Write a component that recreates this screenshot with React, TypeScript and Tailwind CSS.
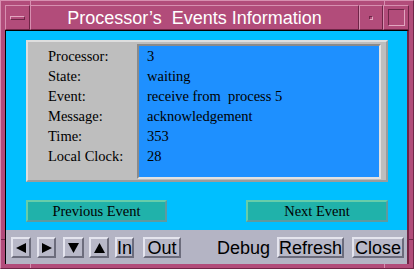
import React from "react";

const serif = { fontFamily: '"Liberation Serif", "Times New Roman", serif' };
const sans = { fontFamily: '"Liberation Sans", Arial, Helvetica, sans-serif' };

function ToolBtn({ children, w }: { children: React.ReactNode; w: string }) {
  return (
    <div
      className={`${w} h-[21px] box-border flex items-center justify-center bg-[#b8b8c8] border-2 border-t-[#e4e4ee] border-l-[#e4e4ee] border-b-[#6c6c7c] border-r-[#6c6c7c] text-black text-[18px] leading-none`}
    >
      {children}
    </div>
  );
}

function Tri({ dir }: { dir: "l" | "r" | "d" | "u" }) {
  const pts =
    dir === "l"
      ? "10,0 10,10 0,5"
      : dir === "r"
      ? "0,0 0,10 10,5"
      : dir === "d"
      ? "0,0 11,0 5.5,10"
      : "5.5,0 11,10 0,10";
  return (
    <svg width={dir === "l" || dir === "r" ? 10 : 11} height={10} viewBox={dir === "l" || dir === "r" ? "0 0 10 10" : "0 0 11 10"}>
      <polygon points={pts} fill="#000" />
    </svg>
  );
}

export default function App() {
  const labels = ["Processor:", "State:", "Event:", "Message:", "Time:", "Local Clock:"];
  const values = ["3", "waiting", "receive from  process 5", "acknowledgement", "353", "28"];
  return (
    <div className="relative w-[414px] h-[269px] box-border bg-[#b24c7a] border border-t-[#d78fb0] border-l-[#d78fb0] border-b-[#6f2547] border-r-[#6f2547] p-[4px] flex flex-col overflow-hidden">
      {/* corner markers */}
      <div className="absolute left-[29px] top-0 w-[1px] h-[4px] bg-[#d78fb0]" />
      <div className="absolute left-[383px] top-0 w-[1px] h-[4px] bg-[#d78fb0]" />
      <div className="absolute left-[29px] bottom-0 w-[1px] h-[4px] bg-[#d78fb0]" />
      <div className="absolute left-[383px] bottom-0 w-[1px] h-[4px] bg-[#d78fb0]" />
      <div className="absolute left-0 top-[238px] w-[4px] h-[1px] bg-[#6f2547]" />
      <div className="absolute right-0 top-[238px] w-[4px] h-[1px] bg-[#6f2547]" />

      {/* title bar */}
      <div className="h-[25px] flex shrink-0">
        <div className="w-[25px] box-border border border-t-[#d78fb0] border-l-[#d78fb0] border-b-[#6f2547] border-r-[#6f2547] flex items-center justify-center">
          <div className="w-[15px] h-[4px] box-border border border-t-[#e2a6c0] border-l-[#e2a6c0] border-b-[#6f2547] border-r-[#6f2547] bg-[#b24c7a]" />
        </div>
        <div
          className="flex-1 box-border border border-t-[#d78fb0] border-l-[#d78fb0] border-b-[#6f2547] border-r-[#6f2547] flex items-center justify-center text-white text-[18px] leading-none"
          style={sans}
        >
          <span className="whitespace-pre">Processor’s  Events Information</span>
        </div>
        <div className="w-[24px] box-border border border-t-[#d78fb0] border-l-[#d78fb0] border-b-[#6f2547] border-r-[#6f2547] flex items-center justify-center">
          <div className="w-[4px] h-[4px] box-border border border-t-[#6f2547] border-l-[#6f2547] border-b-[#e2a6c0] border-r-[#e2a6c0]" />
        </div>
        <div className="w-[26px] box-border border border-t-[#d78fb0] border-l-[#d78fb0] border-b-[#6f2547] border-r-[#6f2547] flex items-center justify-center">
          <div className="w-[17px] h-[17px] box-border border border-t-[#6f2547] border-l-[#6f2547] border-b-[#e2a6c0] border-r-[#e2a6c0]" />
        </div>
      </div>

      {/* content */}
      <div className="flex-1 flex flex-col box-border border-l border-t border-l-black border-t-black border-r-2 border-r-[#6f2547]">
        <div className="flex-1 bg-[#00bfff] flex flex-col pl-[20px] pt-[9px]">
          <div className="w-[362px] h-[142px] box-border bg-[#bebebe] border-2 border-t-[#dedede] border-l-[#dedede] border-b-[#9c9c9c] border-r-[#9c9c9c] flex items-start pr-[5px]">
            <div className="w-[109px] pl-[20px] pt-[4px] flex flex-col text-[14.5px] text-black" style={serif}>
              {labels.map((l) => (
                <div key={l} className="h-[20px] leading-[20px] whitespace-nowrap">
                  {l}
                </div>
              ))}
            </div>
            <div className="mt-[2px] w-[244px] h-[135px] box-border bg-[#1e90ff] border-2 border-t-[#8a8a8a] border-l-[#8a8a8a] border-b-[#e2e2e2] border-r-[#e2e2e2] pl-[8px] flex flex-col text-[14.5px] text-black" style={serif}>
              {values.map((v, i) => (
                <div key={i} className="h-[20px] leading-[20px] whitespace-pre">
                  {v}
                </div>
              ))}
            </div>
          </div>
          <div className="w-[362px] mt-[18px] flex justify-between">
            <div className="w-[141px] h-[22px] box-border bg-[#20b2aa] border-2 border-t-[#66cdaa] border-l-[#66cdaa] border-b-[#5f9a9e] border-r-[#5f9a9e] flex items-center justify-center text-[14.5px] text-black leading-none" style={serif}>
              Previous Event
            </div>
            <div className="w-[142px] h-[22px] box-border bg-[#20b2aa] border-2 border-t-[#66cdaa] border-l-[#66cdaa] border-b-[#5f9a9e] border-r-[#5f9a9e] flex items-center justify-center text-[14.5px] text-black leading-none" style={serif}>
              Next Event
            </div>
          </div>
        </div>

        {/* toolbar */}
        <div className="h-[34px] shrink-0 bg-[#b4b4c4] flex items-start pt-[7px] pl-[5px] pr-[3px]" style={sans}>
          <ToolBtn w="w-[20px]"><Tri dir="l" /></ToolBtn>
          <div className="w-[6px]" />
          <ToolBtn w="w-[19px]"><Tri dir="r" /></ToolBtn>
          <div className="w-[7px]" />
          <ToolBtn w="w-[21px]"><Tri dir="d" /></ToolBtn>
          <div className="w-[5px]" />
          <ToolBtn w="w-[20px]"><Tri dir="u" /></ToolBtn>
          <div className="w-[6px]" />
          <ToolBtn w="w-[19px]">In</ToolBtn>
          <div className="w-[9px]" />
          <ToolBtn w="w-[38px]">Out</ToolBtn>
          <div className="flex-1" />
          <div className="h-[21px] flex items-center text-[18px] leading-none text-black mr-[7px]">Debug</div>
          <ToolBtn w="w-[67px]">Refresh</ToolBtn>
          <div className="w-[8px]" />
          <ToolBtn w="w-[52px]">Close</ToolBtn>
        </div>
      </div>
    </div>
  );
}
